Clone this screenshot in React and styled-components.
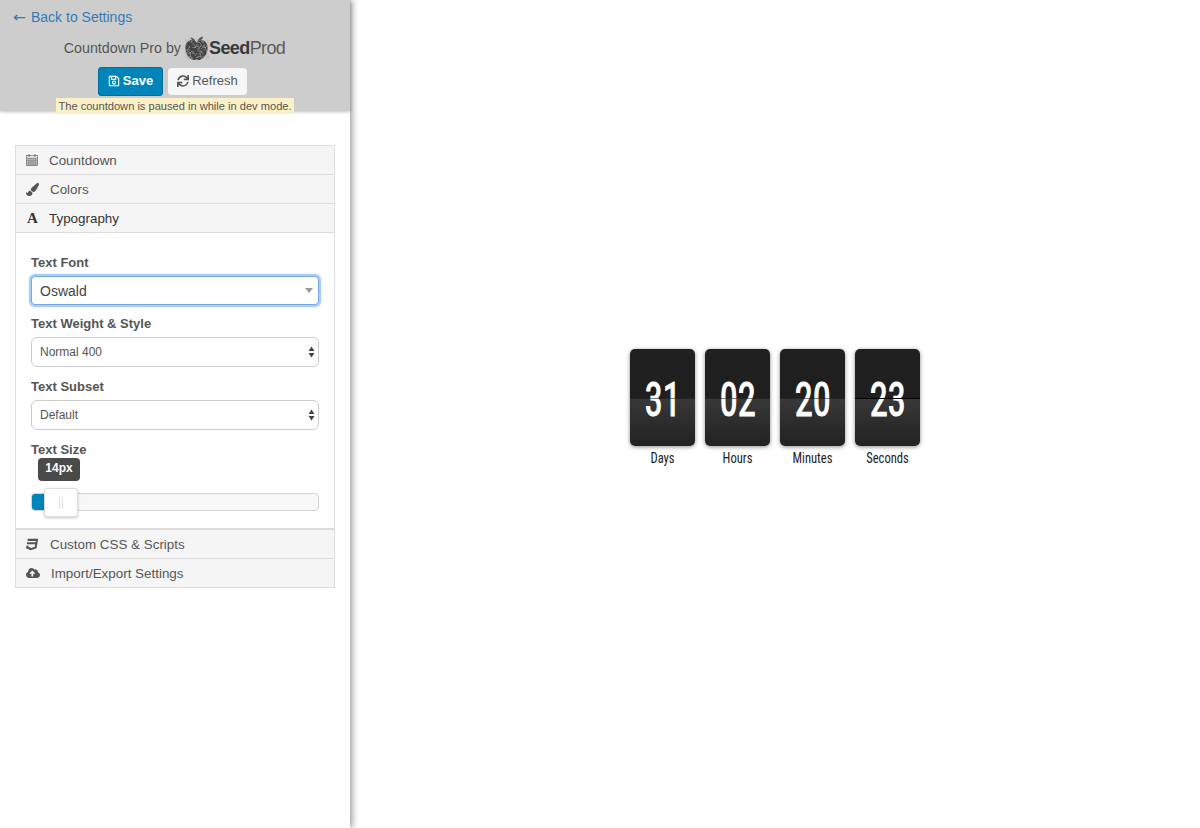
import React from 'react'
import styled, { createGlobalStyle } from 'styled-components'
import { FaRegSave, FaSync, FaPaintBrush, FaCss3, FaCloudUploadAlt } from 'react-icons/fa'

const GlobalStyle = createGlobalStyle`
    html, body {
        margin: 0;
        padding: 0;
        background: #fff;
        font-family: "Liberation Sans", Arial, sans-serif;
        color: #555;
        overflow: hidden;
    }
    * {
        box-sizing: border-box;
    }
`

const Page = styled.div`
    display: flex;
    height: 828px;
`

const Sidebar = styled.aside`
    width: 350px;
    flex-shrink: 0;
    height: 100%;
    background: #fff;
    box-shadow: 2px 0 7px rgba(0, 0, 0, 0.42);
    position: relative;
    z-index: 2;
`

const Header = styled.header`
    height: 111px;
    background: #cdcdcd;
    box-shadow: 0 1px 3px rgba(0, 0, 0, 0.25);
    display: flex;
    flex-direction: column;
    align-items: center;
    padding-top: 8px;
`

const BackLink = styled.a`
    align-self: flex-start;
    margin-left: 13px;
    font-size: 14px;
    line-height: 18px;
    color: #337ab7;
    text-decoration: none;
    display: flex;
    align-items: center;
`

const BackArrow = styled.span`
    font-family: "DejaVu Sans", sans-serif;
    font-size: 14px;
    width: 18px;
    display: inline-block;
    transform-origin: left center;
    transform: scaleX(1.1);
`

const Brand = styled.div`
    display: flex;
    align-items: center;
    height: 26px;
    margin-top: 9px;
    margin-right: 1px;
    font-size: 14.25px;
    color: #555;
`

const LogoMark = styled.svg`
    width: 25px;
    height: 26px;
    margin-left: 3px;
`

const LogoText = styled.span`
    font-size: 18px;
    letter-spacing: -0.6px;
    color: #5a5a5a;
    font-weight: 400;
    b {
        font-weight: 700;
        color: #3a3a3a;
    }
`

const Actions = styled.div`
    display: flex;
    align-items: center;
    gap: 5px;
    margin-top: 6px;
    margin-right: 5px;
`

const Button = styled.button`
    display: flex;
    align-items: center;
    justify-content: center;
    gap: 3px;
    padding: 0 0 2px;
    font-family: inherit;
    font-size: 13px;
    border-radius: 3px;
    width: ${p => (p.$primary ? '65px' : '79px')};
    height: ${p => (p.$primary ? '29px' : '27px')};
    border: 1px solid ${p => (p.$primary ? '#006e9c' : '#f5f5f5')};
    background: ${p => (p.$primary ? '#0085ba' : '#f6f6f6')};
    color: ${p => (p.$primary ? '#fff' : '#555')};
    font-weight: ${p => (p.$primary ? 700 : 400)};
    svg {
        font-size: 12px;
    }
`

const Notice = styled.div`
    margin-top: 2px;
    height: 16px;
    line-height: 16px;
    padding: 0 2px;
    font-size: 11.1px;
    color: #555;
    background: #fcf0c6;
    position: relative;
    z-index: 1;
    white-space: nowrap;
`

const Accordion = styled.div`
    margin: 34px 15px 0;
    border: 1px solid #ddd;
    border-bottom: 0;
    width: 320px;
`

const PanelHead = styled.div`
    display: flex;
    align-items: center;
    height: 29px;
    padding-left: 10px;
    background: #f5f5f5;
    border-bottom: 1px solid #ddd;
    font-size: 13.4px;
    color: ${p => (p.$open ? '#333' : '#555')};
`

const IconSlot = styled.span`
    display: flex;
    align-items: center;
    width: ${p => p.$w || 23}px;
    color: ${p => (p.$open ? '#333' : '#555')};
    font-size: 13px;
`

const SerifIcon = styled.span`
    font-family: "Liberation Serif", serif;
    font-weight: 700;
    font-size: 15px;
    line-height: 1;
    margin-left: 1px;
`

const PanelBody = styled.div`
    height: 297px;
    padding: 22px 15px 0;
    border-bottom: 2px solid #ddd;
`

const Label = styled.div`
    font-size: 13px;
    font-weight: 700;
    line-height: 15px;
    color: #555;
    margin-top: ${p => p.$top || 0}px;
`

const SelectWrap = styled.div`
    position: relative;
    width: 288px;
    margin-top: ${p => p.$top || 6}px;
`

const FontSelect = styled.select`
    display: block;
    width: 100%;
    height: 29px;
    appearance: none;
    background: #fff;
    border: 1px solid #7aa7e0;
    border-radius: 4px;
    box-shadow: 0 0 0 2px #a6cff9, 0 0 2px 2px rgba(140, 190, 245, 0.5);
    padding: 0 8px;
    font-family: inherit;
    font-size: 14px;
    color: #444;
    outline: none;
`

const PlainSelect = styled.select`
    display: block;
    width: 100%;
    height: 30px;
    appearance: none;
    background: #fff;
    border: 1px solid #ccc;
    border-radius: 6px;
    padding: 0 8px;
    font-family: inherit;
    font-size: 12px;
    color: #555;
    outline: none;
`

const Caret = styled.span`
    position: absolute;
    right: 6px;
    top: 12px;
    width: 0;
    height: 0;
    border-left: 4px solid transparent;
    border-right: 4px solid transparent;
    border-top: 5px solid #999;
    pointer-events: none;
`

const Updown = styled.svg`
    position: absolute;
    right: 4px;
    top: 9px;
    width: 7px;
    height: 12px;
    pointer-events: none;
`

const Tooltip = styled.div`
    width: 42px;
    height: 23px;
    margin: 1px 0 0 7px;
    border-radius: 4px;
    background: #4a4a4a;
    color: #fff;
    font-size: 12px;
    font-weight: 700;
    line-height: 21px;
    text-align: center;
`

const Track = styled.div`
    position: relative;
    width: 288px;
    height: 18px;
    margin-top: 12px;
    background: #f8f8f8;
    border: 1px solid #d3d3d3;
    border-radius: 4px;
`

const TrackFill = styled.div`
    width: 16px;
    height: 16px;
    background: #0085ba;
    border-radius: 3px 0 0 3px;
`

const Handle = styled.div`
    position: absolute;
    left: 12px;
    top: -6px;
    width: 34px;
    height: 29px;
    background: #fff;
    border: 1px solid #dedede;
    border-radius: 3px;
    box-shadow: 0 1px 3px rgba(0, 0, 0, 0.22);
    display: flex;
    justify-content: center;
    align-items: center;
    gap: 2px;
    i {
        display: block;
        width: 1px;
        height: 12px;
        background: #ddd;
    }
`

const Stage = styled.main`
    flex: 1;
    display: flex;
    justify-content: center;
    padding-top: 349px;
`

const Clock = styled.div`
    display: flex;
    gap: 10px;
`

const Unit = styled.div`
    width: 65px;
`

const Card = styled.div`
    position: relative;
    height: 97px;
    border-radius: 5px;
    overflow: hidden;
    background: linear-gradient(#202020 0, #1f1f1f 50%, #393939 50%, #2e2e2e 72%, #222 100%);
    box-shadow: 0 1px 4px rgba(0, 0, 0, 0.45);
    display: flex;
    justify-content: center;
    align-items: center;
`

const Digits = styled.span`
    display: block;
    font-family: "Liberation Sans Narrow", "Roboto Condensed", Roboto, sans-serif;
    font-weight: 400;
    -webkit-text-stroke: 1.1px #fff;
    font-size: 48px;
    line-height: 97px;
    color: #fff;
    transform: scaleX(0.76);
    margin-top: 3px;
    white-space: nowrap;
`

const Seam = styled.div`
    position: absolute;
    left: 0;
    right: 0;
    top: 49px;
    height: 1px;
    background: ${p => (p.$strong ? '#000' : 'rgba(20, 20, 20, 0.55)')};
`

const UnitLabel = styled.div`
    margin-top: 2px;
    font-family: "Liberation Sans Narrow", "Roboto Condensed", Roboto, sans-serif;
    font-size: 14px;
    line-height: 20px;
    text-align: center;
    color: #222;
    transform: scaleX(0.9);
`

const CalendarIcon = () => (
    <svg width="12" height="12" viewBox="0 0 12 12" fill="none" stroke="#666" strokeWidth="0.7">
        <rect x="0.5" y="1.5" width="11" height="10" fill="#eee" />
        <path d="M0.5 4.300h11M0.500 6.200h11M0.500 8.100h11M0.500 10h11M2.700 4.300v7.200M4.900 4.300v7.200M7.100 4.300v7.200M9.300 4.300v7.200" />
        <path d="M3 0.200v2.600M9 0.200v2.600" strokeWidth="1.200" />
    </svg>
)

// speckled apple, the noise only has to look irregular
const AppleMark = () => {
    const specks = []
    for (let y = 5; y < 25; y += 1.25) {
        for (let x = 1; x < 24; x += 1.25) {
            const n = Math.sin(x * 12.9898 + y * 78.233) * 43758.5453
            if (n - Math.floor(n) < 0.38) specks.push([x, y])
        }
    }
    return (
        <LogoMark viewBox="0 0 24 26">
            <path d="M12 7C8 4 2 5 1 11c-1 6 3 13 8 14 1.500 0.300 2 -0.500 3 -0.500s1.500 0.800 3 0.500c5 -1 9 -8 8 -14C22 5 16 4 12 7z" fill="#444" />
            <path d="M11 6.500C10 4 8 2.500 6 2.500c0.500 2 2 3.500 5 4zM13 6c1 -2.500 3 -4 5.500 -4.500C18.500 4 16 6 13 6z" fill="#555" />
            {specks.map(([x, y], i) => (
                <circle key={i} cx={x} cy={y} r="0.55" fill="#a8a8a8" />
            ))}
        </LogoMark>
    )
}

const ArrowsIcon = () => (
    <Updown viewBox="0 0 7 12">
        <path d="M3.500 0.500L6.500 5H0.500zM3.500 11.500L0.500 7h6z" fill="#444" />
    </Updown>
)

const units = [
    { value: '31', label: 'Days' },
    { value: '02', label: 'Hours' },
    { value: '20', label: 'Minutes' },
    { value: '23', label: 'Seconds', strong: true },
]

const App = () => {
    return (
        <Page>
            <GlobalStyle />
            <Sidebar>
                <Header>
                    <BackLink href="#"><BackArrow>←</BackArrow>Back to Settings</BackLink>
                    <Brand>
                        Countdown Pro by
                        <AppleMark />
                        <LogoText><b>Seed</b>Prod</LogoText>
                    </Brand>
                    <Actions>
                        <Button $primary><FaRegSave /> Save</Button>
                        <Button><FaSync /> Refresh</Button>
                    </Actions>
                    <Notice>The countdown is paused in while in dev mode.</Notice>
                </Header>

                <Accordion>
                    <PanelHead><IconSlot><CalendarIcon /></IconSlot>Countdown</PanelHead>
                    <PanelHead><IconSlot $w={24}><FaPaintBrush /></IconSlot>Colors</PanelHead>
                    <PanelHead $open><IconSlot $open><SerifIcon>A</SerifIcon></IconSlot>Typography</PanelHead>
                    <PanelBody>
                        <Label>Text Font</Label>
                        <SelectWrap>
                            <FontSelect defaultValue="Oswald"><option>Oswald</option></FontSelect>
                            <Caret />
                        </SelectWrap>
                        <Label $top={11}>Text Weight &amp; Style</Label>
                        <SelectWrap $top={6}>
                            <PlainSelect defaultValue="Normal 400"><option>Normal 400</option></PlainSelect>
                            <ArrowsIcon />
                        </SelectWrap>
                        <Label $top={12}>Text Subset</Label>
                        <SelectWrap $top={6}>
                            <PlainSelect defaultValue="Default"><option>Default</option></PlainSelect>
                            <ArrowsIcon />
                        </SelectWrap>
                        <Label $top={12}>Text Size</Label>
                        <Tooltip>14px</Tooltip>
                        <Track>
                            <TrackFill />
                            <Handle><i /><i /></Handle>
                        </Track>
                    </PanelBody>
                    <PanelHead><IconSlot $w={24}><FaCss3 /></IconSlot>Custom CSS &amp; Scripts</PanelHead>
                    <PanelHead><IconSlot $w={25}><FaCloudUploadAlt size={14} /></IconSlot>Import/Export Settings</PanelHead>
                </Accordion>
            </Sidebar>

            <Stage>
                <Clock>
                    {units.map(u => (
                        <Unit key={u.label}>
                            <Card>
                                <Digits>{u.value}</Digits>
                                <Seam $strong={u.strong} />
                            </Card>
                            <UnitLabel>{u.label}</UnitLabel>
                        </Unit>
                    ))}
                </Clock>
            </Stage>
        </Page>
    )
}

export default App
